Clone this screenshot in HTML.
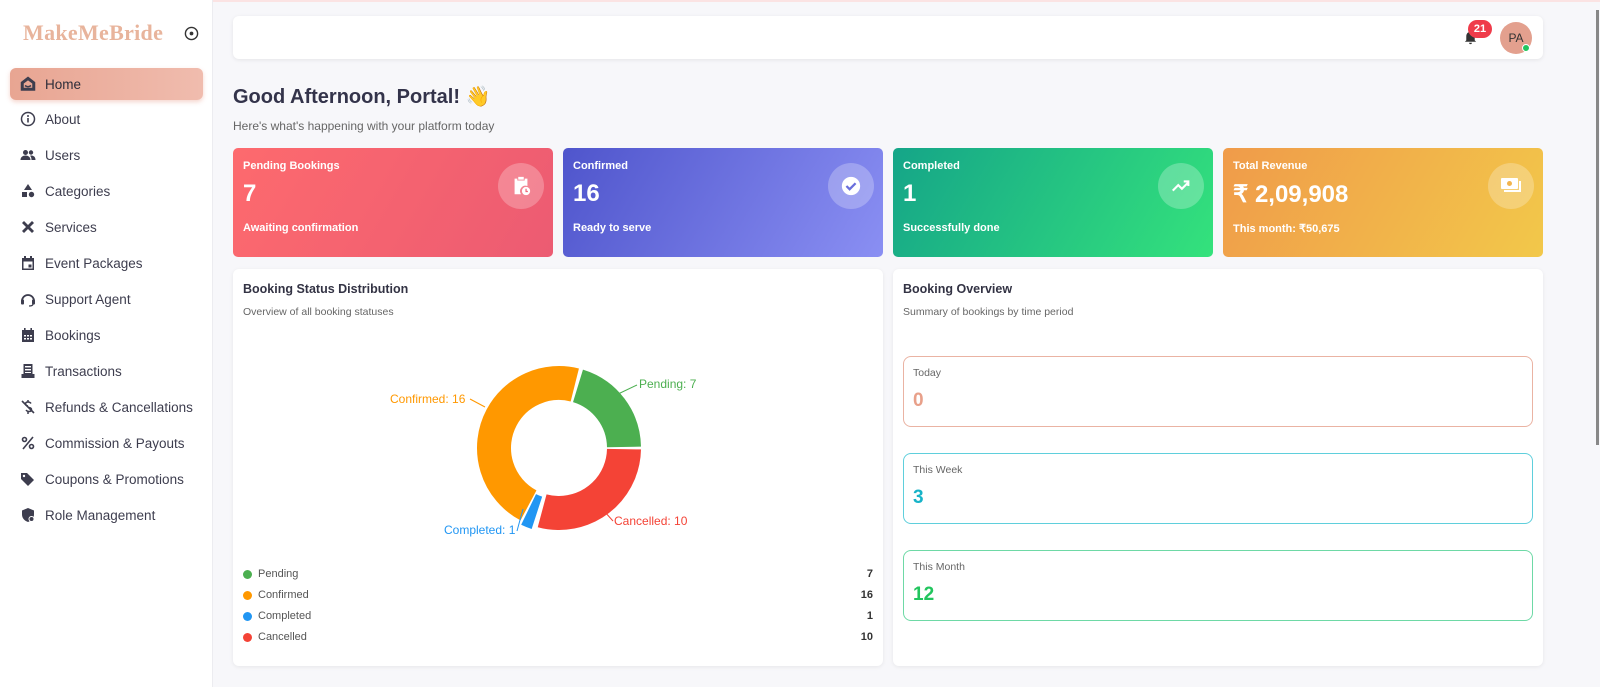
<!DOCTYPE html>
<html><head><meta charset="utf-8"><style>
*{box-sizing:border-box;margin:0;padding:0}
body{width:1600px;height:687px;overflow:hidden;background:#f7f7fa;font-family:"Liberation Sans",sans-serif;color:#3a3a4a;position:relative}
.abs{position:absolute}
.side{left:0;top:0;width:213px;height:687px;background:#fff;border-right:1px solid #ececf0}
.logo{left:23px;top:20px;font-family:"Liberation Serif",serif;font-weight:bold;font-size:22px;color:#e8b49c;letter-spacing:0.3px}
.nav{left:10px;width:193px;height:32px;display:flex;align-items:center;padding-left:10px;font-size:13.5px;color:#3d3d4e}
.nav svg{width:16px;height:16px;margin-right:9px;fill:#3d3d4e}
.nav.act{background:linear-gradient(90deg,#e8a592,#f0bcae);border-radius:6px;box-shadow:0 2px 5px rgba(230,150,130,.4);color:#2d2d3a}
.top{left:233px;top:16px;width:1310px;height:43px;background:#fff;border-radius:6px;box-shadow:0 1px 4px rgba(0,0,0,.08)}
.card{top:148px;width:320px;height:109px;border-radius:5px;color:#fff;padding:12px 10px}
.card .t{font-size:11px;font-weight:bold}
.card .v{font-size:24px;font-weight:bold;margin-top:8px}
.card .s{font-size:11px;font-weight:bold;position:absolute;left:10px;top:74px}
.card .ic{position:absolute;right:9px;top:15px;width:46px;height:46px;border-radius:50%;background:rgba(255,255,255,.25);display:flex;align-items:center;justify-content:center}
.panel{top:269px;width:650px;height:397px;background:#fff;border-radius:6px;box-shadow:0 1px 4px rgba(0,0,0,.07)}
.ph{position:absolute;left:10px;top:13px;font-size:12.5px;font-weight:bold;color:#333344}
.ps{position:absolute;left:10px;top:37px;font-size:10.5px;color:#666}
.leg{position:absolute;left:10px;width:630px;font-size:11px;color:#555;display:flex;align-items:center}
.leg i{width:9px;height:9px;border-radius:50%;margin-right:6px;display:inline-block}
.leg b{margin-left:auto;color:#333;font-size:11px}
.box{left:10px;width:630px;height:71px;border-radius:8px;border:1px solid;padding:10px 9px}
.box .l{font-size:10.5px;color:#666}
.box .n{font-size:19px;font-weight:bold;margin-top:11px}
</style></head><body>
<div class="abs" style="left:0;top:0;width:1600px;height:2px;background:#fbe3e3"></div>
<div class="abs side"></div>
<div class="abs logo">MakeMeBride</div>
<svg class="abs" style="left:184px;top:26px" width="15" height="15" viewBox="0 0 16 16"><circle cx="8" cy="8" r="6.5" fill="none" stroke="#333" stroke-width="1.5"/><circle cx="8" cy="8" r="2" fill="#333"/></svg>

<div class="abs nav act" style="top:68px"><svg viewBox="0 0 16 16"><path d="M8 1.5 1.5 6.5V14h13V6.5Z M3 7.2 8 3.4l5 3.8V12.5H3Z M5 9.5q3 2.5 6 0" fill="none" stroke="#3d3d4e" stroke-width="1.5"/></svg>Home</div>
<div class="abs nav" style="top:103px"><svg viewBox="0 0 16 16"><circle cx="8" cy="8" r="6.5" fill="none" stroke="#3d3d4e" stroke-width="1.5"/><rect x="7.2" y="7" width="1.6" height="4.5"/><circle cx="8" cy="5" r="1"/></svg>About</div>
<div class="abs nav" style="top:139px"><svg viewBox="0 0 16 16"><circle cx="5.5" cy="5.5" r="2.5"/><circle cx="11" cy="5.5" r="2.2"/><path d="M0.5 13c0-3 2.5-4.5 5-4.5s5 1.5 5 4.5Z M11 8.5c2.5 0 4.5 1.3 4.5 4.5h-4c0-2-.5-3.5-1.5-4.3Z"/></svg>Users</div>
<div class="abs nav" style="top:175px"><svg viewBox="0 0 16 16"><path d="M8 1 12 7H4Z"/><rect x="2" y="9" width="5" height="5"/><circle cx="11.5" cy="11.5" r="2.7"/></svg>Categories</div>
<div class="abs nav" style="top:211px"><svg viewBox="0 0 16 16"><path d="M2 4 4 2 14 12 12 14Z M12 2 14 4 4 14 2 12Z"/></svg>Services</div>
<div class="abs nav" style="top:247px"><svg viewBox="0 0 16 16"><path d="M2 3h12v12H2Z M3.5 6.5v7h9v-7Z M4 1h2v3H4Z M10 1h2v3h-2Z"/><rect x="8.5" y="9.5" width="3" height="3"/></svg>Event Packages</div>
<div class="abs nav" style="top:283px"><svg viewBox="0 0 16 16"><path d="M2 10a6 6 0 0 1 12 0" fill="none" stroke="#3d3d4e" stroke-width="1.8"/><rect x="1" y="8.5" width="3" height="5" rx="1"/><rect x="12" y="8.5" width="3" height="5" rx="1"/><path d="M13 13q0 2-4 2" fill="none" stroke="#3d3d4e" stroke-width="1.3"/></svg>Support Agent</div>
<div class="abs nav" style="top:319px"><svg viewBox="0 0 16 16"><path d="M2 3h12v12H2Z"/><rect x="4" y="1" width="1.6" height="3"/><rect x="10.4" y="1" width="1.6" height="3"/><g fill="#fff"><rect x="4" y="8" width="2" height="1.5"/><rect x="7" y="8" width="2" height="1.5"/><rect x="10" y="8" width="2" height="1.5"/><rect x="4" y="11" width="2" height="1.5"/><rect x="7" y="11" width="2" height="1.5"/><rect x="10" y="11" width="2" height="1.5"/></g></svg>Bookings</div>
<div class="abs nav" style="top:355px"><svg viewBox="0 0 16 16"><path d="M3.5 1h9v11h-9Z M1.5 11h13v4h-13Z"/><g fill="#fff"><rect x="5" y="3" width="6" height="1.4"/><rect x="5" y="6" width="6" height="1.4"/><rect x="5" y="9" width="6" height="1"/></g></svg>Transactions</div>
<div class="abs nav" style="top:391px"><svg viewBox="0 0 16 16"><path d="M2 2 14 14" stroke="#3d3d4e" stroke-width="1.6"/><path d="M11 4.5q-1-1.5-3-1.5-2.5 0-2.5 2 0 1.5 2.5 2m1 1.5q2.5.5 2.5 2 0 2-2.5 2-2 0-3-1.5 M8 1v2 M8 13v2" fill="none" stroke="#3d3d4e" stroke-width="1.5"/></svg>Refunds &amp; Cancellations</div>
<div class="abs nav" style="top:427px"><svg viewBox="0 0 16 16"><circle cx="4.5" cy="4.5" r="2" fill="none" stroke="#3d3d4e" stroke-width="1.6"/><circle cx="11.5" cy="11.5" r="2" fill="none" stroke="#3d3d4e" stroke-width="1.6"/><path d="M13 2 3 14" stroke="#3d3d4e" stroke-width="1.6"/></svg>Commission &amp; Payouts</div>
<div class="abs nav" style="top:463px"><svg viewBox="0 0 16 16"><path d="M1 2v6l7 7 6-6-7-7Z"/><circle cx="4" cy="5" r="1.2" fill="#fff"/></svg>Coupons &amp; Promotions</div>
<div class="abs nav" style="top:499px"><svg viewBox="0 0 16 16"><path d="M8 1 2 3.5v4c0 4 3 6.5 6 7.5 3-1 6-3.5 6-7.5v-4Z"/><circle cx="11.5" cy="12" r="3" fill="#fff"/><circle cx="11.5" cy="12" r="2"/></svg>Role Management</div>

<div class="abs top"></div>
<svg class="abs" style="left:1463px;top:30px" width="15" height="16" viewBox="0 0 16 16"><path d="M8 1.5c-3 0-4.5 2-4.5 5v4L2 12h12l-1.5-1.5v-4c0-3-1.5-5-4.5-5Z M6.5 13h3a1.5 1.5 0 0 1-3 0Z" fill="#333"/></svg>
<div class="abs" style="left:1468px;top:20px;width:24px;height:18px;border-radius:9px;background:#ef3b4a;color:#fff;font-size:11px;font-weight:bold;text-align:center;line-height:18px">21</div>
<div class="abs" style="left:1500px;top:22px;width:32px;height:32px;border-radius:50%;background:#e3a08e;color:#333;font-size:12px;text-align:center;line-height:32px">PA</div>
<div class="abs" style="left:1522px;top:44px;width:8px;height:8px;border-radius:50%;background:#22c55e;border:1px solid #fff"></div>
<div class="abs" style="left:1596px;top:10px;width:3px;height:435px;background:#888"></div>

<div class="abs" style="left:233px;top:84px;font-size:20px;font-weight:bold;color:#33334a">Good Afternoon, Portal! 👋</div>
<div class="abs" style="left:233px;top:119px;font-size:12px;color:#666">Here's what's happening with your platform today</div>

<div class="abs card" style="left:233px;background:linear-gradient(120deg,#fd6a6e,#ec5b72)"><div class="t">Pending Bookings</div><div class="v">7</div><div class="s">Awaiting confirmation</div><div class="ic"><svg width="22" height="22" viewBox="0 0 24 24" fill="#fff"><path d="M5 4h3v2h8V4h3v8a6 6 0 0 0-7 9H5Z M9 2h6v3H9Z"/><circle cx="17.5" cy="17.5" r="4.5"/><path d="M17.5 15v3h2" stroke="#f0667a" stroke-width="1.3" fill="none"/></svg></div></div>
<div class="abs card" style="left:563px;background:linear-gradient(120deg,#4f55cc,#8a8ff3)"><div class="t">Confirmed</div><div class="v">16</div><div class="s">Ready to serve</div><div class="ic"><svg width="22" height="22" viewBox="0 0 24 24"><circle cx="12" cy="12" r="10" fill="#fff"/><path d="M7 12l3.5 3.5L17 9" stroke="#6a6fdc" stroke-width="2.5" fill="none"/></svg></div></div>
<div class="abs card" style="left:893px;background:linear-gradient(120deg,#15a588,#34e27c)"><div class="t">Completed</div><div class="v">1</div><div class="s">Successfully done</div><div class="ic"><svg width="22" height="22" viewBox="0 0 24 24"><path d="M3 17l6-6 4 4 7-7 M15 7h5v5" stroke="#fff" stroke-width="2.3" fill="none"/></svg></div></div>
<div class="abs card" style="left:1223px;background:linear-gradient(120deg,#f09b4a,#f2c84a)"><div class="t">Total Revenue</div><div class="v">₹ 2,09,908</div><div class="s">This month: ₹50,675</div><div class="ic"><svg width="24" height="22" viewBox="0 0 24 22" fill="#fff"><rect x="2" y="3" width="17" height="11" rx="1"/><circle cx="10.5" cy="8.5" r="2.5" fill="#f2b44d"/><path d="M21 6v10H5" stroke="#fff" stroke-width="2" fill="none"/></svg></div></div>

<div class="abs panel" style="left:233px">
<div class="ph">Booking Status Distribution</div><div class="ps">Overview of all booking statuses</div>
<svg class="abs" style="left:0;top:0" width="650" height="290">
<g transform="translate(326,179)" fill="none" stroke-width="34">
<circle r="65" stroke="#4caf50" stroke-dasharray="81.7 400" transform="rotate(-73)"/>
<circle r="65" stroke="#f44336" stroke-dasharray="118 400" transform="rotate(1)"/>
<circle r="65" stroke="#2196f3" stroke-dasharray="9 400" transform="translate(-2,3) rotate(108)"/>
<circle r="65" stroke="#ff9800" stroke-dasharray="188.3 400" transform="rotate(118)"/>
</g>
<g font-size="12" font-family="Liberation Sans,sans-serif">
<path d="M383 126 L404 116" stroke="#4caf50" fill="none"/><text x="406" y="119" fill="#4caf50">Pending: 7</text>
<path d="M237 130 L252 138" stroke="#ff9800" fill="none"/><text x="157" y="134" fill="#ff9800">Confirmed: 16</text>
<path d="M363 233 L380 252" stroke="#f44336" fill="none"/><text x="381" y="256" fill="#f44336">Cancelled: 10</text>
<path d="M290 240 L284 262" stroke="#2196f3" fill="none"/><text x="211" y="265" fill="#2196f3">Completed: 1</text>
</g></svg>
<div class="leg" style="top:299px"><i style="background:#4caf50"></i>Pending<b>7</b></div>
<div class="leg" style="top:320px"><i style="background:#ff9800"></i>Confirmed<b>16</b></div>
<div class="leg" style="top:341px"><i style="background:#2196f3"></i>Completed<b>1</b></div>
<div class="leg" style="top:362px"><i style="background:#f44336"></i>Cancelled<b>10</b></div>
</div>

<div class="abs panel" style="left:893px">
<div class="ph">Booking Overview</div><div class="ps">Summary of bookings by time period</div>
<div class="abs box" style="top:87px;border-color:#eab3a3"><div class="l">Today</div><div class="n" style="color:#e8a08a">0</div></div>
<div class="abs box" style="top:184px;border-color:#5fcfdc"><div class="l">This Week</div><div class="n" style="color:#17b3c8">3</div></div>
<div class="abs box" style="top:281px;border-color:#6ed9a6"><div class="l">This Month</div><div class="n" style="color:#22c55e">12</div></div>
</div>
</body></html>
